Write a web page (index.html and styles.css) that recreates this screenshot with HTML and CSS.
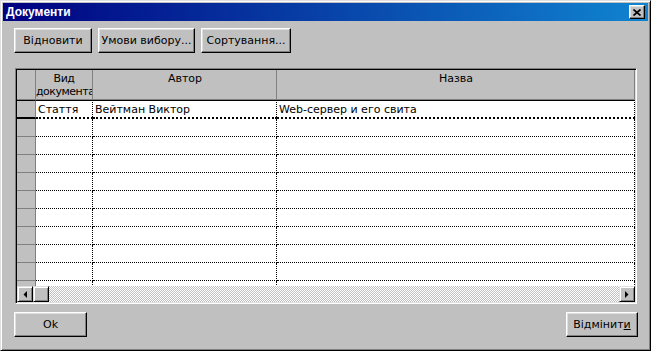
FILE: index.html
```html
<!DOCTYPE html>
<html lang="uk">
<head>
    <meta charset="UTF-8">
    <title>Документи</title>
    <link rel="stylesheet" href="styles.css">
</head>
<body>

<div class="window">
    <div class="titlebar">
        <span class="title">Документи</span>
        <button class="close" type="button">
            <svg width="8" height="7" viewBox="0 0 8 7"><path d="M0.5 0.5 L7.5 6.5 M7.5 0.5 L0.5 6.5" stroke="#000" stroke-width="1.7" fill="none"/></svg>
        </button>
    </div>

    <div class="content">
        <div class="toolbar">
            <button class="btn btn-restore" type="button">Відновити</button>
            <button class="btn btn-filter" type="button">Умови вибору...</button>
            <button class="btn btn-sort" type="button">Сортування...</button>
        </div>

        <div class="grid">
            <div class="row head">
                <div class="cell ind"></div>
                <div class="cell narrow">Вид документа</div>
                <div class="cell">Автор</div>
                <div class="cell">Назва</div>
            </div>

            <div class="rows">
                <div class="row current">
                    <div class="cell ind"></div>
                    <div class="cell">Стаття</div>
                    <div class="cell">Вейтман Виктор</div>
                    <div class="cell">Web-сервер и его свита</div>
                </div>
                <div class="row"><div class="cell ind"></div><div class="cell"></div><div class="cell"></div><div class="cell"></div></div>
                <div class="row"><div class="cell ind"></div><div class="cell"></div><div class="cell"></div><div class="cell"></div></div>
                <div class="row"><div class="cell ind"></div><div class="cell"></div><div class="cell"></div><div class="cell"></div></div>
                <div class="row"><div class="cell ind"></div><div class="cell"></div><div class="cell"></div><div class="cell"></div></div>
                <div class="row"><div class="cell ind"></div><div class="cell"></div><div class="cell"></div><div class="cell"></div></div>
                <div class="row"><div class="cell ind"></div><div class="cell"></div><div class="cell"></div><div class="cell"></div></div>
                <div class="row"><div class="cell ind"></div><div class="cell"></div><div class="cell"></div><div class="cell"></div></div>
                <div class="row"><div class="cell ind"></div><div class="cell"></div><div class="cell"></div><div class="cell"></div></div>
                <div class="row"><div class="cell ind"></div><div class="cell"></div><div class="cell"></div><div class="cell"></div></div>
                <div class="row"><div class="cell ind"></div><div class="cell"></div><div class="cell"></div><div class="cell"></div></div>
            </div>

            <div class="hscroll">
                <div class="sb-btn">
                    <svg width="4" height="7" viewBox="0 0 4 7"><path d="M4 0 L4 7 L0.5 3.5 Z" fill="#000"/></svg>
                </div>
                <div class="sb-btn"></div>
                <div class="sb-track"></div>
                <div class="sb-btn">
                    <svg width="4" height="7" viewBox="0 0 4 7"><path d="M0 0 L0 7 L3.5 3.5 Z" fill="#000"/></svg>
                </div>
            </div>
        </div>

        <div class="footer">
            <button class="btn btn-ok" type="button">Ok</button>
            <button class="btn btn-cancel" type="button">Відмінит<u>и</u></button>
        </div>
    </div>
</div>

</body>
</html>
```

FILE: styles.css
```css
* {
    box-sizing: border-box;
}
html, body {
    margin: 0;
}
body {
    width: 651px;
    height: 351px;
    overflow: hidden;
    font-family: "DejaVu Sans", "Liberation Sans", sans-serif;
    font-size: 11px;
    color: #000;
    background-color: #c0c0c0;
}
.window {
    width: 651px;
    height: 351px;
    display: flex;
    flex-direction: column;
    padding: 2px;
    background-color: #c0c0c0;
    border: 1px solid;
    border-color: #dfdfdf #000 #000 #dfdfdf;
    box-shadow: inset 1px 1px #fff, inset -1px -1px #808080;
}
.titlebar {
    height: 18px;
    display: flex;
    align-items: center;
    justify-content: space-between;
    padding: 0 3px 0 3px;
    background: linear-gradient(to right, #000080, #1084d0);
    color: #fff;
}
.title {
    font-family: "Liberation Sans", Arial, sans-serif;
    font-size: 12px;
    font-weight: bold;
}
.close {
    width: 16px;
    height: 14px;
    padding: 0;
    display: flex;
    align-items: center;
    justify-content: center;
    background-color: #c0c0c0;
    border: 1px solid;
    border-color: #fff #000 #000 #fff;
    box-shadow: inset -1px -1px #808080, inset 1px 1px #dfdfdf;
}
.content {
    flex: 1;
    display: flex;
    flex-direction: column;
    padding: 7px 10px 0 11px;
}
.toolbar {
    display: flex;
    gap: 6px;
}
.btn {
    height: 25px;
    padding: 0;
    font: inherit;
    color: #000;
    background-color: #c0c0c0;
    border: 1px solid;
    border-color: #fff #000 #000 #fff;
    box-shadow: inset -1px -1px #808080, inset 1px 1px #dfdfdf;
}
.btn-restore { width: 78px; }
.btn-filter { width: 97px; }
.btn-sort { width: 90px; }
.btn-ok { width: 73px; }
.btn-cancel { width: 72px; }

/* grid */
.grid {
    width: 622px;
    height: 236px;
    margin: 15px 1px 0 1px;
    padding: 1px;
    display: flex;
    flex-direction: column;
    background-color: #c0c0c0;
    border: 1px solid;
    border-color: #808080 #fff #fff #808080;
    box-shadow: inset 1px 1px #000, inset -1px -1px #dfdfdf;
}
.row {
    display: grid;
    grid-template-columns: 19px 57px 184px 358px;
    height: 18px;
}
.cell {
    overflow: hidden;
    white-space: nowrap;
    background-color: #fff;
    border-right: 1px dotted #000;
    border-bottom: 1px dotted #000;
    padding: 0 2px;
}
.cell.ind {
    padding: 0;
    background-color: #c0c0c0;
    border-right: 1px solid #808080;
    border-bottom: 1px solid #808080;
}
.head {
    height: 30px;
}
.head .cell {
    background-color: #c0c0c0;
    border-right: 1px solid #808080;
    border-bottom: 1px solid #808080;
    padding: 2px 0 0 1px;
    line-height: 13px;
    text-align: center;
    white-space: normal;
}
.head .narrow {
    padding-left: 0;
    letter-spacing: -0.5px;
}
.rows {
    height: 186px;
    overflow: hidden;
}
.row.current {
    height: 19px;
}
.current .cell {
    border-top: 1px solid #000;
    border-bottom: 2px dotted #000;
    padding-top: 2px;
    line-height: 14px;
}
.current .cell.ind {
    border-bottom: 2px solid #000;
}
.hscroll {
    height: 16px;
    display: flex;
}
.sb-btn {
    width: 16px;
    height: 16px;
    display: flex;
    align-items: center;
    justify-content: center;
    background-color: #c0c0c0;
    border: 1px solid;
    border-color: #dfdfdf #000 #000 #dfdfdf;
    box-shadow: inset 1px 1px #fff, inset -1px -1px #808080;
}
.sb-track {
    flex: 1;
    background-image: conic-gradient(#fff 25%, #c0c0c0 0 50%, #fff 0 75%, #c0c0c0 0);
    background-size: 2px 2px;
}
.footer {
    display: flex;
    justify-content: space-between;
    margin-top: 8px;
}
```
